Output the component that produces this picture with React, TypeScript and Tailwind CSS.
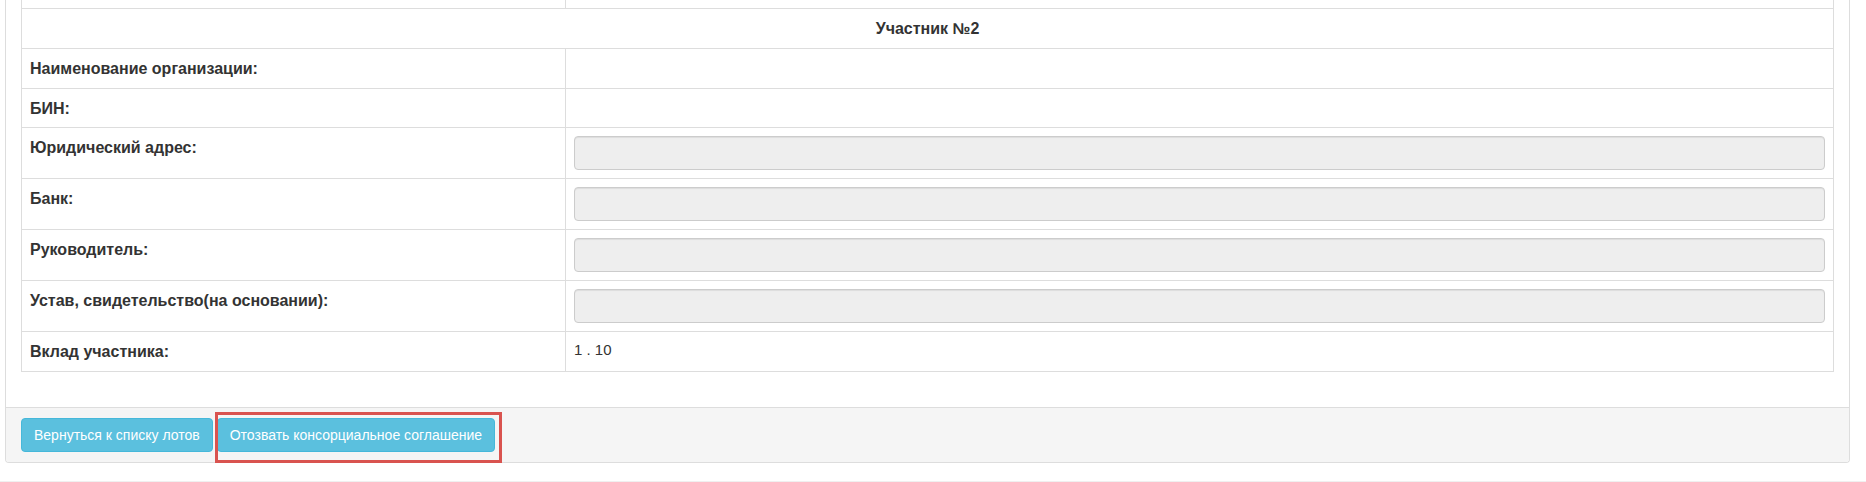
import { FC, ReactNode } from 'react';

const font = { fontFamily: '"Liberation Sans", Arial, Helvetica, sans-serif' };

interface RowProps {
  label: string;
  h: string;
  children?: ReactNode;
}

const Row: FC<RowProps> = ({ label, h, children }) => (
  <div className={`flex border-b border-[#ddd] ${h}`}>
    <div className="w-[544px] shrink-0 border-r border-[#ddd] px-2 pt-2">
      <span className="text-[16px] leading-5 font-bold text-[#333]">{label}</span>
    </div>
    <div className="flex-1 px-2 pt-2">{children}</div>
  </div>
);

const h40 = 'h-[40px]';
const h39 = 'h-[39px]';
const h51 = 'h-[51px]';

const Field: FC = () => (
  <div className="h-[34px] w-full rounded-[4px] border border-[#ccc] bg-[#eee] shadow-[inset_0_1px_1px_rgba(0,0,0,0.075)]" />
);

export default function App() {
  return (
    <div className="min-h-[482px] w-[1866px] overflow-hidden bg-white text-[#333]" style={font}>
      <div className="ml-[5px] w-[1845px] rounded-b-[4px] border-x border-b border-[#ddd] bg-white">
        <div className="px-[15px] pb-[35px]">
          <div className="border-x border-b border-[#ddd]">
            {/* tail of the previous participant */}
            <div className="flex h-[9px] border-b border-[#ddd]">
              <div className="w-[544px] shrink-0 border-r border-[#ddd]" />
              <div className="flex-1" />
            </div>
            <div className={`border-b border-[#ddd] pt-2 text-center ${h40}`}>
              <span className="text-[16px] leading-5 font-bold text-[#333]">Участник №2</span>
            </div>
            <Row label="Наименование организации:" h={h40} />
            <Row label="БИН:" h={h39} />
            <Row label="Юридический адрес:" h={h51}>
              <Field />
            </Row>
            <Row label="Банк:" h={h51}>
              <Field />
            </Row>
            <Row label="Руководитель:" h={h51}>
              <Field />
            </Row>
            <Row label="Устав, свидетельство(на основании):" h={h51}>
              <Field />
            </Row>
            <div className={`flex ${h39}`}>
              <div className="w-[544px] shrink-0 border-r border-[#ddd] px-2 pt-2">
                <span className="text-[16px] leading-5 font-bold text-[#333]">Вклад участника:</span>
              </div>
              <div className="flex-1 px-2 pt-2 text-[15px] leading-5 text-[#333]">1 . 10</div>
            </div>
          </div>
        </div>
        <div className="flex items-center gap-[4px] rounded-b-[3px] border-t border-[#ddd] bg-[#f5f5f5] px-[15px] py-[10px]">
          <button className="h-[34px] rounded-[4px] border border-[#46b8da] bg-[#5bc0de] px-3 text-[14px] leading-5 text-white">
            Вернуться к списку лотов
          </button>
          <div className="relative">
            <button className="h-[34px] rounded-[4px] border border-[#46b8da] bg-[#5bc0de] px-3 text-[14px] leading-5 text-white">
              Отозвать консорциальное соглашение
            </button>
            <div className="pointer-events-none absolute -left-[2px] -top-[6px] -right-[7px] h-[51px] border-[3px] border-[#d9534f]" />
          </div>
        </div>
      </div>
      <div className="mt-[18px] border-t border-[#f0f0f0]" />
    </div>
  );
}
